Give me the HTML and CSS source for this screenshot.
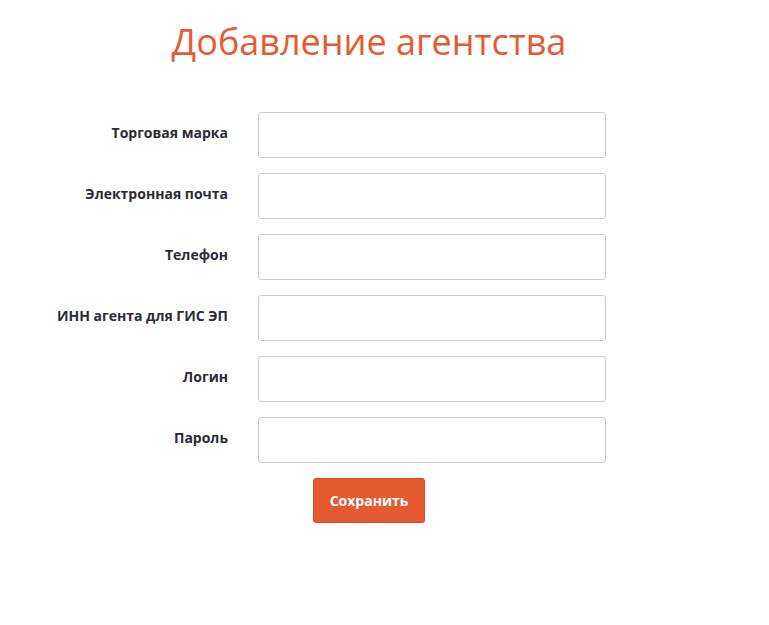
FILE: index.html
```html
<!DOCTYPE html>
<html lang="ru">
<head>
  <meta charset="UTF-8">
  <meta name="viewport" content="width=device-width, initial-scale=1.0">
  <title>Добавление агентства</title>
  <link rel="stylesheet" href="styles.css">
</head>
<body>
  <div class="page">
    <h1 class="page-title">Добавление агентства</h1>

    <form class="agency-form">
      <div class="form-row">
        <label for="brand">Торговая марка</label>
        <input type="text" id="brand">
      </div>
      <div class="form-row">
        <label for="email">Электронная почта</label>
        <input type="email" id="email">
      </div>
      <div class="form-row">
        <label for="phone">Телефон</label>
        <input type="text" id="phone">
      </div>
      <div class="form-row">
        <label for="inn">ИНН агента для ГИС ЭП</label>
        <input type="text" id="inn">
      </div>
      <div class="form-row">
        <label for="login">Логин</label>
        <input type="text" id="login">
      </div>
      <div class="form-row">
        <label for="password">Пароль</label>
        <input type="password" id="password">
      </div>
      <div class="form-actions">
        <button type="submit" class="btn-save">Сохранить</button>
      </div>
    </form>
  </div>
</body>
</html>
```

FILE: styles.css
```css
* {
  box-sizing: border-box;
  margin: 0;
  padding: 0;
}

body {
  font-family: "Open Sans", "Liberation Sans", sans-serif;
  background: #fff;
  color: #333;
}

.page {
  width: 738px;
  padding-top: 16px;
}

.page-title {
  font-size: 36px;
  font-weight: 400;
  line-height: 52px;
  color: #e65a32;
  text-align: center;
}

.agency-form {
  margin-top: 44px;
}

.form-row {
  display: grid;
  grid-template-columns: 228px 348px;
  column-gap: 30px;
  margin-bottom: 15px;
}

.form-row label {
  text-align: right;
  font-size: 14px;
  font-weight: 700;
  line-height: 20px;
  padding-top: 11px;
  color: #2b2b36;
}

.form-row input {
  height: 46px;
  border: 1px solid #ccc;
  border-radius: 3px;
  padding: 0 12px;
  font-family: inherit;
  font-size: 14px;
}

.form-actions {
  padding-left: 313px;
}

.btn-save {
  width: 112px;
  height: 45px;
  background: #e65a32;
  border: 1px solid #d54b24;
  border-radius: 3px;
  color: #fff;
  font-family: inherit;
  font-size: 14px;
  font-weight: 700;
  cursor: pointer;
}
```
